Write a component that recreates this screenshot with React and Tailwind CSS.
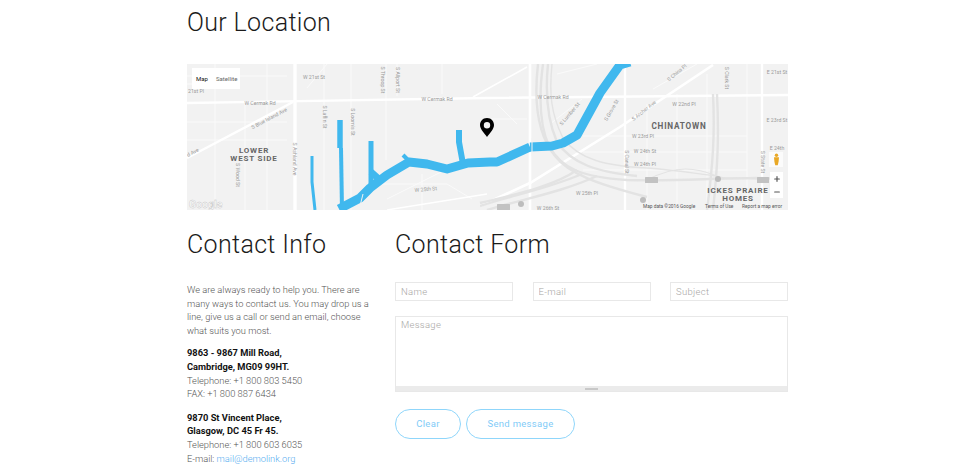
import { Plus, Minus } from "lucide-react";

const inputClass =
  "w-[118px] h-[19px] border border-[#e8e8e8] px-[5px] text-[9.5px] tracking-[0.3px] font-light text-[#888] placeholder:text-[#a8a6a4] outline-none";

const headingClass = "text-[25px] leading-[30px] font-light tracking-[0.34px] text-[#1b1b1b]";

function MapLabel({ x, y, children, size = 5.2, rotate, bold, anchor = "middle", fill = "#9a9a9a" }) {
  return (
    <text
      x={x}
      y={y}
      fontSize={size}
      fill={fill}
      fontWeight={bold ? 700 : 400}
      letterSpacing={bold ? 0.8 : 0}
      textAnchor={anchor}
      transform={rotate ? `rotate(${rotate} ${x} ${y})` : undefined}
    >
      {children}
    </text>
  );
}

function MapDrawing() {
  return (
    <svg viewBox="0 0 601 146" className="absolute inset-0 w-full h-full font-['Roboto',sans-serif]">
      <rect width="601" height="146" fill="#f2f2f2" />

      {/* small streets */}
      <g stroke="#fafafa" strokeWidth="1" fill="none">
        <path d="M0 12H100M0 20H30M0 58H100M0 76H100M28 0V146M58 40V146M80 0V146M137 0V146M164 0V146M199 0V96M210 0V32M255 0V30" />
        <path d="M120 24L140 0M190 120H260M200 135L260 105M235 110V146M260 120L285 135" />
        <path d="M300 55H340M310 40L330 60M363 60L395 35M396 72H560M396 88H560M396 106H560M460 40V146M490 30V146M520 10V146M560 0V146M370 10L410 0M466 25L510 0" />
      </g>

      {/* main roads */}
      <g stroke="#ffffff" fill="none">
        <path d="M0 39L300 34L601 31" strokeWidth="2.4" />
        <path d="M108 0V146" strokeWidth="3.4" />
        <path d="M0 94L106 38" strokeWidth="2.4" />
        <path d="M343 0V146" strokeWidth="2.6" />
        <path d="M438 0V146" strokeWidth="2.4" />
        <path d="M575 0V146" strokeWidth="2.4" />
        <path d="M293 142L343 119L433 63L526 1" strokeWidth="2.6" />
        <path d="M286 33L340 3" strokeWidth="1.6" />
        <path d="M200 146L300 130" strokeWidth="1.4" />
      </g>

      {/* expressways */}
      <g stroke="#e3e3e3" fill="none" strokeWidth="2.4">
        <path d="M356 0C352 30 352 60 362 82C375 105 395 113 440 116C500 118 540 112 590 115" />
        <path d="M351 0C347 35 350 70 368 92C382 110 410 120 460 133" />
        <path d="M361 0C358 30 360 55 370 78C385 100 410 108 450 112" />
        <path d="M365 0C362 30 364 50 376 74C392 96 420 102 460 104C490 106 510 110 530 112" strokeWidth="1.4" />
        <path d="M293 142C330 130 360 125 395 110" />
        <path d="M293 139C340 128 370 120 390 106" />
        <path d="M300 146C340 134 375 128 410 112" />
        <path d="M526 30C528 70 526 100 520 146" />
        <path d="M530 30C532 70 531 100 526 146" />
        <path d="M460 116C490 100 510 104 530 112C545 118 560 110 590 115" strokeWidth="1.2" />
      </g>

      {/* water */}
      <g stroke="#40b8ee" fill="none" strokeLinejoin="round">
        <path d="M152 145L173 134L183 124L200 111L222 98L240 100L260 105L281 99L303 98L310 98L343 83" strokeWidth="9" />
        <path d="M343 83L365 82L376 79L390 71L413 29L433 1L443 -2" strokeWidth="9" />
        <path d="M153 56V84" strokeWidth="5.5" />
        <path d="M154 84L155 146" strokeWidth="4" />
        <path d="M184 77V126" strokeWidth="5" />
        <path d="M125 92L125 118L128 146" strokeWidth="3" />
        <path d="M272 66V78L276 100" strokeWidth="6" />
        <path d="M216 91L223 98" strokeWidth="4" />
        <path d="M184 108L193 116" strokeWidth="7" />
      </g>
      <path d="M172 146L176 130M345 74V92" stroke="#f2f2f2" strokeWidth="1" />

      {/* street names */}
      <MapLabel x={127} y={15}>W 21st St</MapLabel>
      <MapLabel x={1} y={29} anchor="start">21st Pl</MapLabel>
      <MapLabel x={73} y={41}>W Cermak Rd</MapLabel>
      <MapLabel x={250} y={37}>W Cermak Rd</MapLabel>
      <MapLabel x={366} y={35}>W Cermak Rd</MapLabel>
      <MapLabel x={83} y={56} rotate={-28}>S Blue Island Ave</MapLabel>
      <MapLabel x={1} y={93} anchor="start" rotate={-28}>d Ave</MapLabel>
      <MapLabel x={194} y={16} rotate={90}>S Throop St</MapLabel>
      <MapLabel x={209} y={16} rotate={90}>S Allport St</MapLabel>
      <MapLabel x={136} y={53} rotate={90}>S Laflin St</MapLabel>
      <MapLabel x={164} y={58} rotate={90}>S Loomis St</MapLabel>
      <MapLabel x={106} y={95} rotate={90}>S Ashland Ave</MapLabel>
      <MapLabel x={49} y={111} rotate={90}>S Wood St</MapLabel>
      <MapLabel x={239} y={127} rotate={-5}>W 25th St</MapLabel>
      <MapLabel x={384} y={51} rotate={-50}>S Lumber St</MapLabel>
      <MapLabel x={426} y={47} rotate={-60}>S Grove St</MapLabel>
      <MapLabel x={458} y={48} rotate={-38}>S Archer Ave</MapLabel>
      <MapLabel x={497} y={42}>W 22nd Pl</MapLabel>
      <MapLabel x={456} y={74}>W 23rd Pl</MapLabel>
      <MapLabel x={458} y={89}>W 24th St</MapLabel>
      <MapLabel x={458} y={102}>W 24th Pl</MapLabel>
      <MapLabel x={400} y={131}>W 25th Pl</MapLabel>
      <MapLabel x={361} y={146}>W 26th St</MapLabel>
      <MapLabel x={438} y={98} rotate={90}>S Canal St</MapLabel>
      <MapLabel x={491} y={10} rotate={-40}>S China Pl</MapLabel>
      <MapLabel x={538} y={14} rotate={90}>S Clark St</MapLabel>
      <MapLabel x={590} y={10}>E 21st St</MapLabel>
      <MapLabel x={590} y={58}>E 23rd St</MapLabel>
      <MapLabel x={590} y={86}>E 24th</MapLabel>
      <MapLabel x={574} y={98} rotate={90}>S State St</MapLabel>

      {/* neighbourhoods */}
      <MapLabel x={67} y={89} size={8} bold fill="#666">LOWER</MapLabel>
      <MapLabel x={67} y={97} size={8} bold fill="#666">WEST SIDE</MapLabel>
      <MapLabel x={492} y={65} size={8.2} bold fill="#666">CHINATOWN</MapLabel>
      <MapLabel x={551} y={129} size={8} bold fill="#666">ICKES PRAIRE</MapLabel>
      <MapLabel x={551} y={137} size={8} bold fill="#666">HOMES</MapLabel>

      {/* highway shields */}
      <rect x="458" y="113" width="13" height="6" rx="0.5" fill="#c2c2c2" />
      <rect x="570" y="113" width="12" height="6" rx="0.5" fill="#c2c2c2" />
      <rect x="310" y="140" width="13" height="6" rx="0.5" fill="#c2c2c2" />
      <circle cx="531" cy="115" r="3" fill="#bdbdbd" />
      <circle cx="334" cy="140" r="3" fill="#bdbdbd" />
      <circle cx="456" cy="136" r="3" fill="#bdbdbd" />

      {/* pin */}
      <path
        d="M300 54C295.500 54 293 57.500 293 61C293 65.500 298 70 300 73C302 70 307 65.500 307 61C307 57.500 304.500 54 300 54ZM300 58A3.200 3.200 0 1 1 300 64.400A3.200 3.200 0 0 1 300 58Z"
        fill="#000"
        fillRule="evenodd"
      />

      <text x="2" y="144" fontSize="10.500" fontWeight="700" fill="#fff" stroke="#c4c4c4" strokeWidth="0.400">Google</text>
      <text x="456" y="144" fontSize="4.800" fill="#555">Map data ©2016 Google</text>
      <text x="518" y="144" fontSize="4.800" fill="#555">Terms of Use</text>
      <text x="555" y="144" fontSize="4.800" fill="#555">Report a map error</text>
    </svg>
  );
}

export default function App() {
  return (
    <div className="w-[980px] h-[471px] overflow-hidden bg-white font-['Roboto',sans-serif]">
      <div className="ml-[187px] w-[601px]">
        <h2 className={`pt-[8px] h-[64px] ${headingClass}`}>Our Location</h2>

        <div className="relative h-[146px] overflow-hidden">
          <MapDrawing />
          <div className="absolute left-[5px] top-[4px] w-[48px] h-[21px] flex items-center bg-white text-[6px]">
            <span className="pl-[4px] w-[24px] text-[#111]">Map</span>
            <span className="text-[#666]">Satellite</span>
          </div>
          {/* street view man */}
          <div className="absolute left-[582px] top-[88px] w-[14px] h-[15px] flex justify-center bg-white/70">
            <svg viewBox="0 0 10 14" className="w-[9px] h-[13px] mt-px">
              <circle cx="5" cy="2.200" r="1.900" fill="#e9a825" />
              <path d="M2.200 4.600H7.800L7.300 9.500L6.400 13.500H3.600L2.700 9.500Z" fill="#e9a825" />
            </svg>
          </div>
          <div className="absolute left-[583px] top-[108px] w-[13px] h-[26px] flex flex-col items-center justify-around bg-white text-[#555]">
            <Plus size={8} strokeWidth={3.5} />
            <Minus size={8} strokeWidth={3.5} />
          </div>
        </div>

        <div className="flex mt-[19px]">
          <div className="w-[208px]">
            <h2 className={`h-[54px] pt-px ${headingClass}`}>Contact Info</h2>
            <div className="w-[184px] text-[9.300px] leading-[13.600px] font-light text-[#555]">
              <p>
                We are always ready to help you. There are many ways to contact us. You may drop us a line, give us a
                call or send an email, choose what suits you most.
              </p>
              <p className="mt-[9px]">
                <span className="block font-bold text-[#111]">9863 - 9867 Mill Road,</span>
                <span className="block font-bold text-[#111]">Cambridge, MG09 99HT.</span>
                <span className="block">Telephone: +1 800 803 5450</span>
                <span className="block">FAX: +1 800 887 6434</span>
              </p>
              <p className="mt-[10px]">
                <span className="block font-bold text-[#111]">9870 St Vincent Place,</span>
                <span className="block font-bold text-[#111]">Glasgow, DC 45 Fr 45.</span>
                <span className="block">Telephone: +1 800 603 6035</span>
                <span className="block">
                  E-mail: <span className="text-[#57aef0]">mail@demolink.org</span>
                </span>
              </p>
            </div>
          </div>

          <div className="w-[393px]">
            <h2 className={`h-[53px] pt-px ${headingClass}`}>Contact Form</h2>
            <div className="flex justify-between">
              <input className={inputClass} placeholder="Name" />
              <input className={inputClass} placeholder="E-mail" />
              <input className={inputClass} placeholder="Subject" />
            </div>
            <div className="mt-[15px] h-[76px] flex flex-col border border-[#e8e8e8]">
              <textarea
                className="flex-1 resize-none px-[5px] py-px text-[9.500px] tracking-[0.3px] font-light placeholder:text-[#a8a6a4] outline-none"
                placeholder="Message"
              />
              <div className="h-[5px] flex items-center justify-center bg-[#ebebeb]">
                <div className="w-[13px] h-[2px] bg-[#c8c8c8]" />
              </div>
            </div>
            <div className="flex gap-[5px] mt-[17px]">
              <button className="w-[66px] h-[30px] rounded-full border border-[#8fd6fb] text-[9.500px] tracking-[0.3px] text-[#7fcbf7]">
                Clear
              </button>
              <button className="w-[109px] h-[30px] rounded-full border border-[#8fd6fb] text-[9.500px] tracking-[0.3px] text-[#7fcbf7]">
                Send message
              </button>
            </div>
          </div>
        </div>
      </div>
    </div>
  );
}
